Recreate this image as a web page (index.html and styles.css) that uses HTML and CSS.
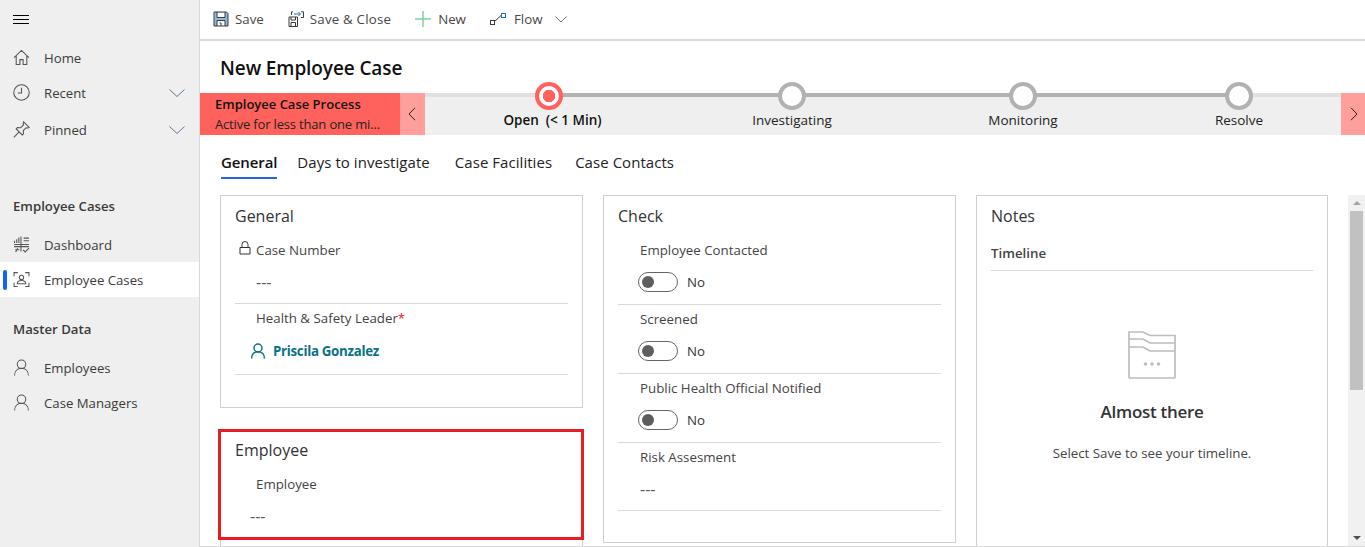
FILE: index.html
```html
<!DOCTYPE html>
<html lang="en">
<head>
<meta charset="utf-8">
<title>New Employee Case</title>
<link rel="stylesheet" href="styles.css">
</head>
<body>
<div class="app">
  <aside class="sidebar">
    <button class="hamburger" aria-label="Menu"><span></span><span></span><span></span></button>
    <nav class="nav nav-top">
      <a class="nav-row"><svg class="nav-icon" viewBox="0 0 16 16"><path d="M1 8.200 8 1.400l7 6.800M3 6.500v8h3.500V10h3v4.500h3.500v-8"/></svg><span class="nav-text">Home</span></a>
      <a class="nav-row"><svg class="nav-icon" viewBox="0 0 16 16"><circle cx="8" cy="8" r="7.300"/><path d="M8 3.500V8.500H4.500"/></svg><span class="nav-text">Recent</span><svg class="nav-chev" viewBox="0 0 16 8"><path d="M.5.500 8 7.500 15.500.500"/></svg></a>
      <a class="nav-row nav-row-pinned"><svg class="nav-icon" viewBox="0 0 16 16"><path d="M.8 15.300 5.500 10.500M10 .8l5.200 5.200-1 .5-1.800-.2-2.700 2.700.2 3-1.200 1.100L3 7.400l1.100-1.200 3 .2 2.700-2.700-.2-1.800z"/></svg><span class="nav-text">Pinned</span><svg class="nav-chev" viewBox="0 0 16 8"><path d="M.5.500 8 7.500 15.500.500"/></svg></a>
    </nav>
    <h2 class="nav-head nav-head-cases">Employee Cases</h2>
    <nav class="nav">
      <a class="nav-row"><svg class="nav-icon" viewBox="0 0 16 16"><path d="M1.500 4.500v2M3.500 3v3.500M5.500 1.500v5M7.500.5v14M10 2h5M10 4.500h5M1 8h14M1 10h14M2 13h4M2.500 15l2-3.500M9.500 13l2 2 3.500-3.500"/></svg><span class="nav-text">Dashboard</span></a>
      <a class="nav-row nav-row-active"><i class="active-mark"></i><svg class="nav-icon" viewBox="0 0 16 16"><path d="M1 5V1.500h3.500M11.500 1.500H15V5M1 11v3.500h3.500M11.500 14.500H15V11"/><circle cx="8" cy="6" r="2"/><path d="M4 12c0-2 1.800-3 4-3s4 1 4 3z"/></svg><span class="nav-text">Employee Cases</span></a>
    </nav>
    <h2 class="nav-head nav-head-master">Master Data</h2>
    <nav class="nav">
      <a class="nav-row"><svg class="nav-icon" viewBox="0 0 16 16"><circle cx="8" cy="5" r="4"/><path d="M1.500 15.500c0-4 2.500-6.800 6.500-6.800s6.500 2.800 6.500 6.800"/></svg><span class="nav-text">Employees</span></a>
      <a class="nav-row"><svg class="nav-icon" viewBox="0 0 16 16"><circle cx="8" cy="5" r="4"/><path d="M1.500 15.500c0-4 2.500-6.800 6.500-6.800s6.500 2.800 6.500 6.800"/></svg><span class="nav-text">Case Managers</span></a>
    </nav>
  </aside>

  <main class="main">
    <header class="toolbar">
      <button class="tool tool-save"><svg class="tool-icon" viewBox="0 0 16 16"><path class="fill-blue" d="M1.500 1h12l1.500 1.500V15H1z"/><path class="fill-white" d="M4 1.500h8v5H4zM4 10h8v5H4z"/><path class="line-dark" d="M1 1h12.500L15 2.500V15H1zM4 1v5.500h8V1M4 15v-5.500h8V15M6.500 12h1.500v3"/></svg><span>Save</span></button>
      <button class="tool tool-close"><svg class="tool-icon" viewBox="0 0 16 16"><path class="line-dark" d="M1 6h8.500v9.500H1zM3 6v3h4.500V6M3 15.500V11.500h4.500v4"/><path class="line-blue" d="M6 3h6M10.500 1 12.500 3l-2 2"/><path class="line-dark" d="M3.500 4V.8h1.500M13 .8h2.500V6.500H13"/></svg><span>Save &amp; Close</span></button>
      <button class="tool tool-new"><svg class="tool-icon" viewBox="0 0 16 16"><path class="line-green" d="M8 0v16M0 8h16"/></svg><span>New</span></button>
      <button class="tool tool-flow"><svg class="tool-icon" viewBox="0 0 16 16"><rect class="line-dark" x=".5" y="9.500" width="4" height="4"/><path class="line-dark" d="M4.500 10.500 11 4.500"/><rect class="line-blue" x="11.500" y="2.500" width="4" height="4"/></svg><span>Flow</span></button>
      <svg class="tool-chev" viewBox="0 0 12 7"><path d="M.5.500 6 6l5.500-5.500"/></svg>
    </header>

    <h1 class="page-title">New Employee Case</h1>

    <section class="process">
      <div class="process-name">
        <strong>Employee Case Process</strong>
        <span>Active for less than one mi...</span>
      </div>
      <button class="process-arrow process-prev"><svg viewBox="0 0 8 14"><path d="M7 .8 1 7l6 6.200"/></svg></button>
      <div class="stages">
        <i class="stage-line"></i>
        <div class="stage stage-current"><i class="stage-dot"></i><span>Open&nbsp; (&lt; 1 Min)</span></div>
        <div class="stage"><i class="stage-dot"></i><span>Investigating</span></div>
        <div class="stage"><i class="stage-dot"></i><span>Monitoring</span></div>
        <div class="stage stage-last"><i class="stage-dot"></i><span>Resolve</span></div>
      </div>
      <button class="process-arrow process-next"><svg viewBox="0 0 8 14"><path d="M1 .8 7 7l-6 6.200"/></svg></button>
    </section>

    <div class="tabs">
      <a class="tab tab-active">General</a>
      <a class="tab">Days to investigate</a>
      <a class="tab">Case Facilities</a>
      <a class="tab">Case Contacts</a>
    </div>

    <div class="form">
      <div class="col col-general">
        <section class="card card-general">
          <h3 class="card-title">General</h3>
          <div class="field field-first">
            <label class="label label-locked"><svg class="lock" viewBox="0 0 12 14"><path d="M1 6.500h10V13H1zM3 6.500V3.500a3 3 0 0 1 6 0v3"/></svg>Case Number</label>
            <div class="value">---</div>
          </div>
          <div class="field field-tall">
            <label class="label">Health &amp; Safety Leader<em>*</em></label>
            <div class="lookup"><svg viewBox="0 0 16 16"><circle cx="8" cy="5" r="4"/><path d="M1.500 15.500c0-4 2.500-6.800 6.500-6.800s6.500 2.800 6.500 6.800"/></svg><a>Priscila Gonzalez</a></div>
          </div>
        </section>
        <section class="card card-employee">
          <h3 class="card-title">Employee</h3>
          <div class="field-plain">
            <label class="label">Employee</label>
            <div class="value value-left">---</div>
          </div>
          <i class="highlight"></i>
        </section>
      </div>

      <section class="card card-check">
        <h3 class="card-title">Check</h3>
        <div class="field field-first">
          <label class="label">Employee Contacted</label>
          <div class="toggle-row"><i class="toggle"></i><span>No</span></div>
        </div>
        <div class="field">
          <label class="label">Screened</label>
          <div class="toggle-row"><i class="toggle"></i><span>No</span></div>
        </div>
        <div class="field">
          <label class="label">Public Health Official Notified</label>
          <div class="toggle-row"><i class="toggle"></i><span>No</span></div>
        </div>
        <div class="field field-risk">
          <label class="label">Risk Assesment</label>
          <div class="value">---</div>
        </div>
      </section>

      <section class="card card-notes">
        <h3 class="card-title">Notes</h3>
        <div class="timeline-head">Timeline</div>
        <div class="empty">
          <svg class="empty-icon" viewBox="0 0 48 48"><path d="M1 1h14l7 3.500h25V46a1 1 0 0 1-1 1H2a1 1 0 0 1-1-1zM1 8h14l7 4h25M1 16h14l7 4h25"/><circle class="dot" cx="17.500" cy="33" r="1.800"/><circle class="dot" cx="24" cy="33" r="1.800"/><circle class="dot" cx="30.500" cy="33" r="1.800"/></svg>
          <div class="empty-title">Almost there</div>
          <div class="empty-text">Select Save to see your timeline.</div>
        </div>
      </section>

      <div class="scrollbar">
        <i class="scroll-up"></i>
        <i class="scroll-thumb"></i>
        <i class="scroll-down"></i>
      </div>
    </div>
  </main>
</div>
</body>
</html>
```

FILE: styles.css
```css
* { box-sizing: border-box; }
html, body { margin: 0; height: 547px; overflow: hidden; background: #fff; }
body { font-family: "Open Sans", "Noto Sans", "Liberation Sans", sans-serif; font-size: 13.3px; color: #333; }
button { font: inherit; color: inherit; background: none; border: 0; padding: 0; }
svg { display: block; fill: none; stroke: currentColor; stroke-width: 1; }

.app { display: flex; height: 547px; }

/* sidebar */
.sidebar { width: 200px; flex: none; background: #efefef; border-right: 1px solid #d9d9d9; height: 547px; }
.hamburger { display: flex; flex-direction: column; gap: 3px; margin: 15px 0 0 13px; width: 16px; height: 9px; }
.hamburger span { display: block; height: 1px; width: 16px; background: #000; }
.nav-top { margin-top: 16px; }
.nav-row { display: flex; align-items: center; height: 35px; padding-left: 13px; position: relative; color: #3b3a39; }
.nav-row-pinned { margin-top: 2px; }
.nav-icon { width: 17px; height: 17px; color: #555; flex: none; }
.nav-text { margin-left: 14px; font-size: 13.2px; }
.nav-chev { width: 16px; height: 8px; margin-left: auto; margin-right: 14px; color: #5b7a99; }
.nav-row-active { background: #fff; }
.active-mark { position: absolute; left: 3px; top: 8px; width: 4px; height: 20px; border-radius: 2px; background: #0f62fe; }
.nav-head { margin: 0; padding-left: 13px; font-size: 13.2px; font-weight: 600; color: #3b3a39; line-height: 18px; }
.nav-head-cases { margin-top: 50px; margin-bottom: 12px; }
.nav-head-master { margin-top: 23px; margin-bottom: 12px; }

/* main column */
.main { flex: 1; min-width: 0; display: flex; flex-direction: column; height: 547px; border-bottom: 1px solid #d9d9d9; overflow: hidden; }

.toolbar { display: flex; align-items: center; height: 41px; flex: none; border-bottom: 2px solid #d9d9d9; padding-left: 13px; padding-bottom: 1px; }
.tool { display: flex; align-items: center; gap: 6px; color: #484644; }
.tool-icon { width: 16px; height: 16px; }
.tool-close { margin-left: 24px; letter-spacing: .2px; }
.tool-new { margin-left: 24px; gap: 7px; }
.tool-flow { margin-left: 24px; gap: 8px; }
.tool-chev { width: 12px; height: 7px; margin-left: 13px; color: #5b7a99; }
.fill-blue { fill: #8fb8de; stroke: none; }
.fill-white { fill: #fff; stroke: none; }
.line-dark { stroke: #3b3a39; }
.line-blue { stroke: #1a6fb5; }
.line-green { stroke: #7fcf9e; stroke-width: 1.500; }

.page-title { margin: 0; height: 52px; flex: none; padding: 13px 0 0 20px; font-size: 19px; font-weight: 600; line-height: 28px; color: #111; letter-spacing: -.1px; }

/* process */
.process { display: flex; height: 42px; flex: none; }
.process-name { width: 200px; flex: none; background: #ff625d; padding: 1px 0 0 15px; display: flex; flex-direction: column; line-height: 20px; font-size: 13px; color: #222; white-space: nowrap; letter-spacing: -.17px; }
.process-name strong { font-weight: 600; font-size: 13px; color: #111; letter-spacing: 0; }
.process-arrow { width: 25px; flex: none; background: #ff9f9c; display: flex; align-items: center; justify-content: center; color: #222; padding-right: 2px; }
.process-next { width: 24px; padding: 0 0 0 1px; }
.process-arrow svg { width: 8px; height: 14px; }
.stages { flex: 1; position: relative; background: #efefef; border-top: 4px solid #e0e0e0; display: grid; grid-template-columns: 248px 238px 224px 1fr; font-size: 13.500px; }
.stage-line { position: absolute; left: 124px; width: 690px; top: -4px; height: 4px; background: #b2b2b2; }
.stage { display: flex; flex-direction: column; align-items: center; position: relative; color: #222; }
.stage-last { padding-left: 2px; }
.stage-dot { position: absolute; top: -15px; width: 28px; height: 28px; border-radius: 50%; border: 4px solid #b2b2b2; background: #fff; }
.stage span { margin-top: 14px; line-height: 18px; white-space: nowrap; }
.stage-current span { font-weight: 600; color: #111; margin-left: 7px; }
.stage-current .stage-dot { border-color: #ff625d; background: radial-gradient(circle, #ff625d 0 6px, #fff 6.500px); }

/* tabs */
.tabs { display: flex; height: 45px; padding: 15px 0 0 21px; flex: none; font-size: 15px; letter-spacing: .05px; }
.tab { height: 29px; line-height: 24px; margin-right: 20px; color: #222; }
.tab:nth-child(3) { margin-left: 5px; margin-right: 23px; }
.tab:nth-child(4) { margin-right: 0; }
.tab-active { font-weight: 600; border-bottom: 2px solid #2266e3; color: #111; letter-spacing: -.1px; }

/* form */
.form { flex: 1; min-height: 0; display: flex; padding: 15px 0 0 20px; gap: 20px; align-items: flex-start; }
.col { display: flex; flex-direction: column; gap: 22px; }
.card { border: 1px solid #cfcfcf; background: #fff; position: relative; }
.col-general { width: 363px; flex: none; }
.card-general { height: 213px; }
.card-employee { height: 120px; }
.card-check { width: 353px; flex: none; height: 348px; }
.card-notes { width: 352px; flex: none; height: 360px; }
.card-title { margin: 0; height: 40px; padding: 9px 0 0 14px; font-size: 16px; font-weight: 400; line-height: 22px; color: #333; }
.card-employee .card-title { padding-top: 8px; }
.field { height: 69px; margin: 0 14px; border-bottom: 1px solid #d9d9d9; padding: 4px 0 0 22px; }
.field-first { padding-top: 4px; }
.card-general .field { padding-left: 21px; }
.card-general .field-first { height: 68px; }
.field-tall { height: 71px; }
.field-risk { height: 68px; }
.field-plain { padding: 3px 0 0 35px; }
.label { display: block; height: 20px; line-height: 20px; color: #444; white-space: nowrap; }
.label em { color: #e81123; font-style: normal; }
.label-locked { position: relative; }
.lock { position: absolute; left: -17px; top: 1px; width: 12px; height: 14px; color: #333; }
.value { margin-top: 12px; line-height: 20px; font-size: 16px; color: #555; }
.value-left { margin-left: -6px; }
.lookup { display: flex; align-items: center; margin: 13px 0 0 -6px; height: 20px; color: #0a7288; }
.lookup svg { width: 16px; height: 16px; margin-right: 7px; stroke-width: 1.500; }
.lookup a { font-weight: 700; letter-spacing: -.3px; }
.toggle-row { display: flex; align-items: center; margin: 10px 0 0 -2px; height: 24px; color: #333; }
.toggle { width: 40px; height: 20px; border: 1px solid #666; border-radius: 10px; margin-right: 9px; display: flex; align-items: center; padding-left: 3px; }
.toggle::before { content: ""; width: 12px; height: 12px; border-radius: 50%; background: #605e5c; }
.highlight { position: absolute; left: -3px; right: -2px; top: -2px; height: 111px; border: 3px solid #e81c25; pointer-events: none; }

/* notes */
.timeline-head { margin: 0 14px; height: 35px; border-bottom: 1px solid #d9d9d9; padding-top: 7px; line-height: 20px; font-weight: 600; color: #444; }
.empty { display: flex; flex-direction: column; align-items: center; padding-top: 60px; }
.empty-icon { width: 48px; height: 48px; color: #bdbdbd; stroke-width: 1.700; }
.empty-icon .dot { fill: #bdbdbd; stroke: none; }
.empty-title { margin-top: 21px; font-size: 17px; font-weight: 600; line-height: 24px; color: #333; letter-spacing: -.3px; }
.empty-text { margin-top: 19px; line-height: 20px; color: #444; }

/* scrollbar */
.scrollbar { width: 17px; flex: none; margin-left: 0; height: 351px; background: #f1f1f1; display: flex; flex-direction: column; align-items: center; position: relative; }
.scroll-up { margin-top: 6px; border: 4px solid transparent; border-top: 0; border-bottom: 4px solid #a3a3a3; }
.scroll-thumb { width: 13px; height: 179px; margin-top: 6px; background: #c1c1c1; }
.scroll-down { margin-top: auto; margin-bottom: 6px; border: 4px solid transparent; border-bottom: 0; border-top: 4px solid #505050; }
```
